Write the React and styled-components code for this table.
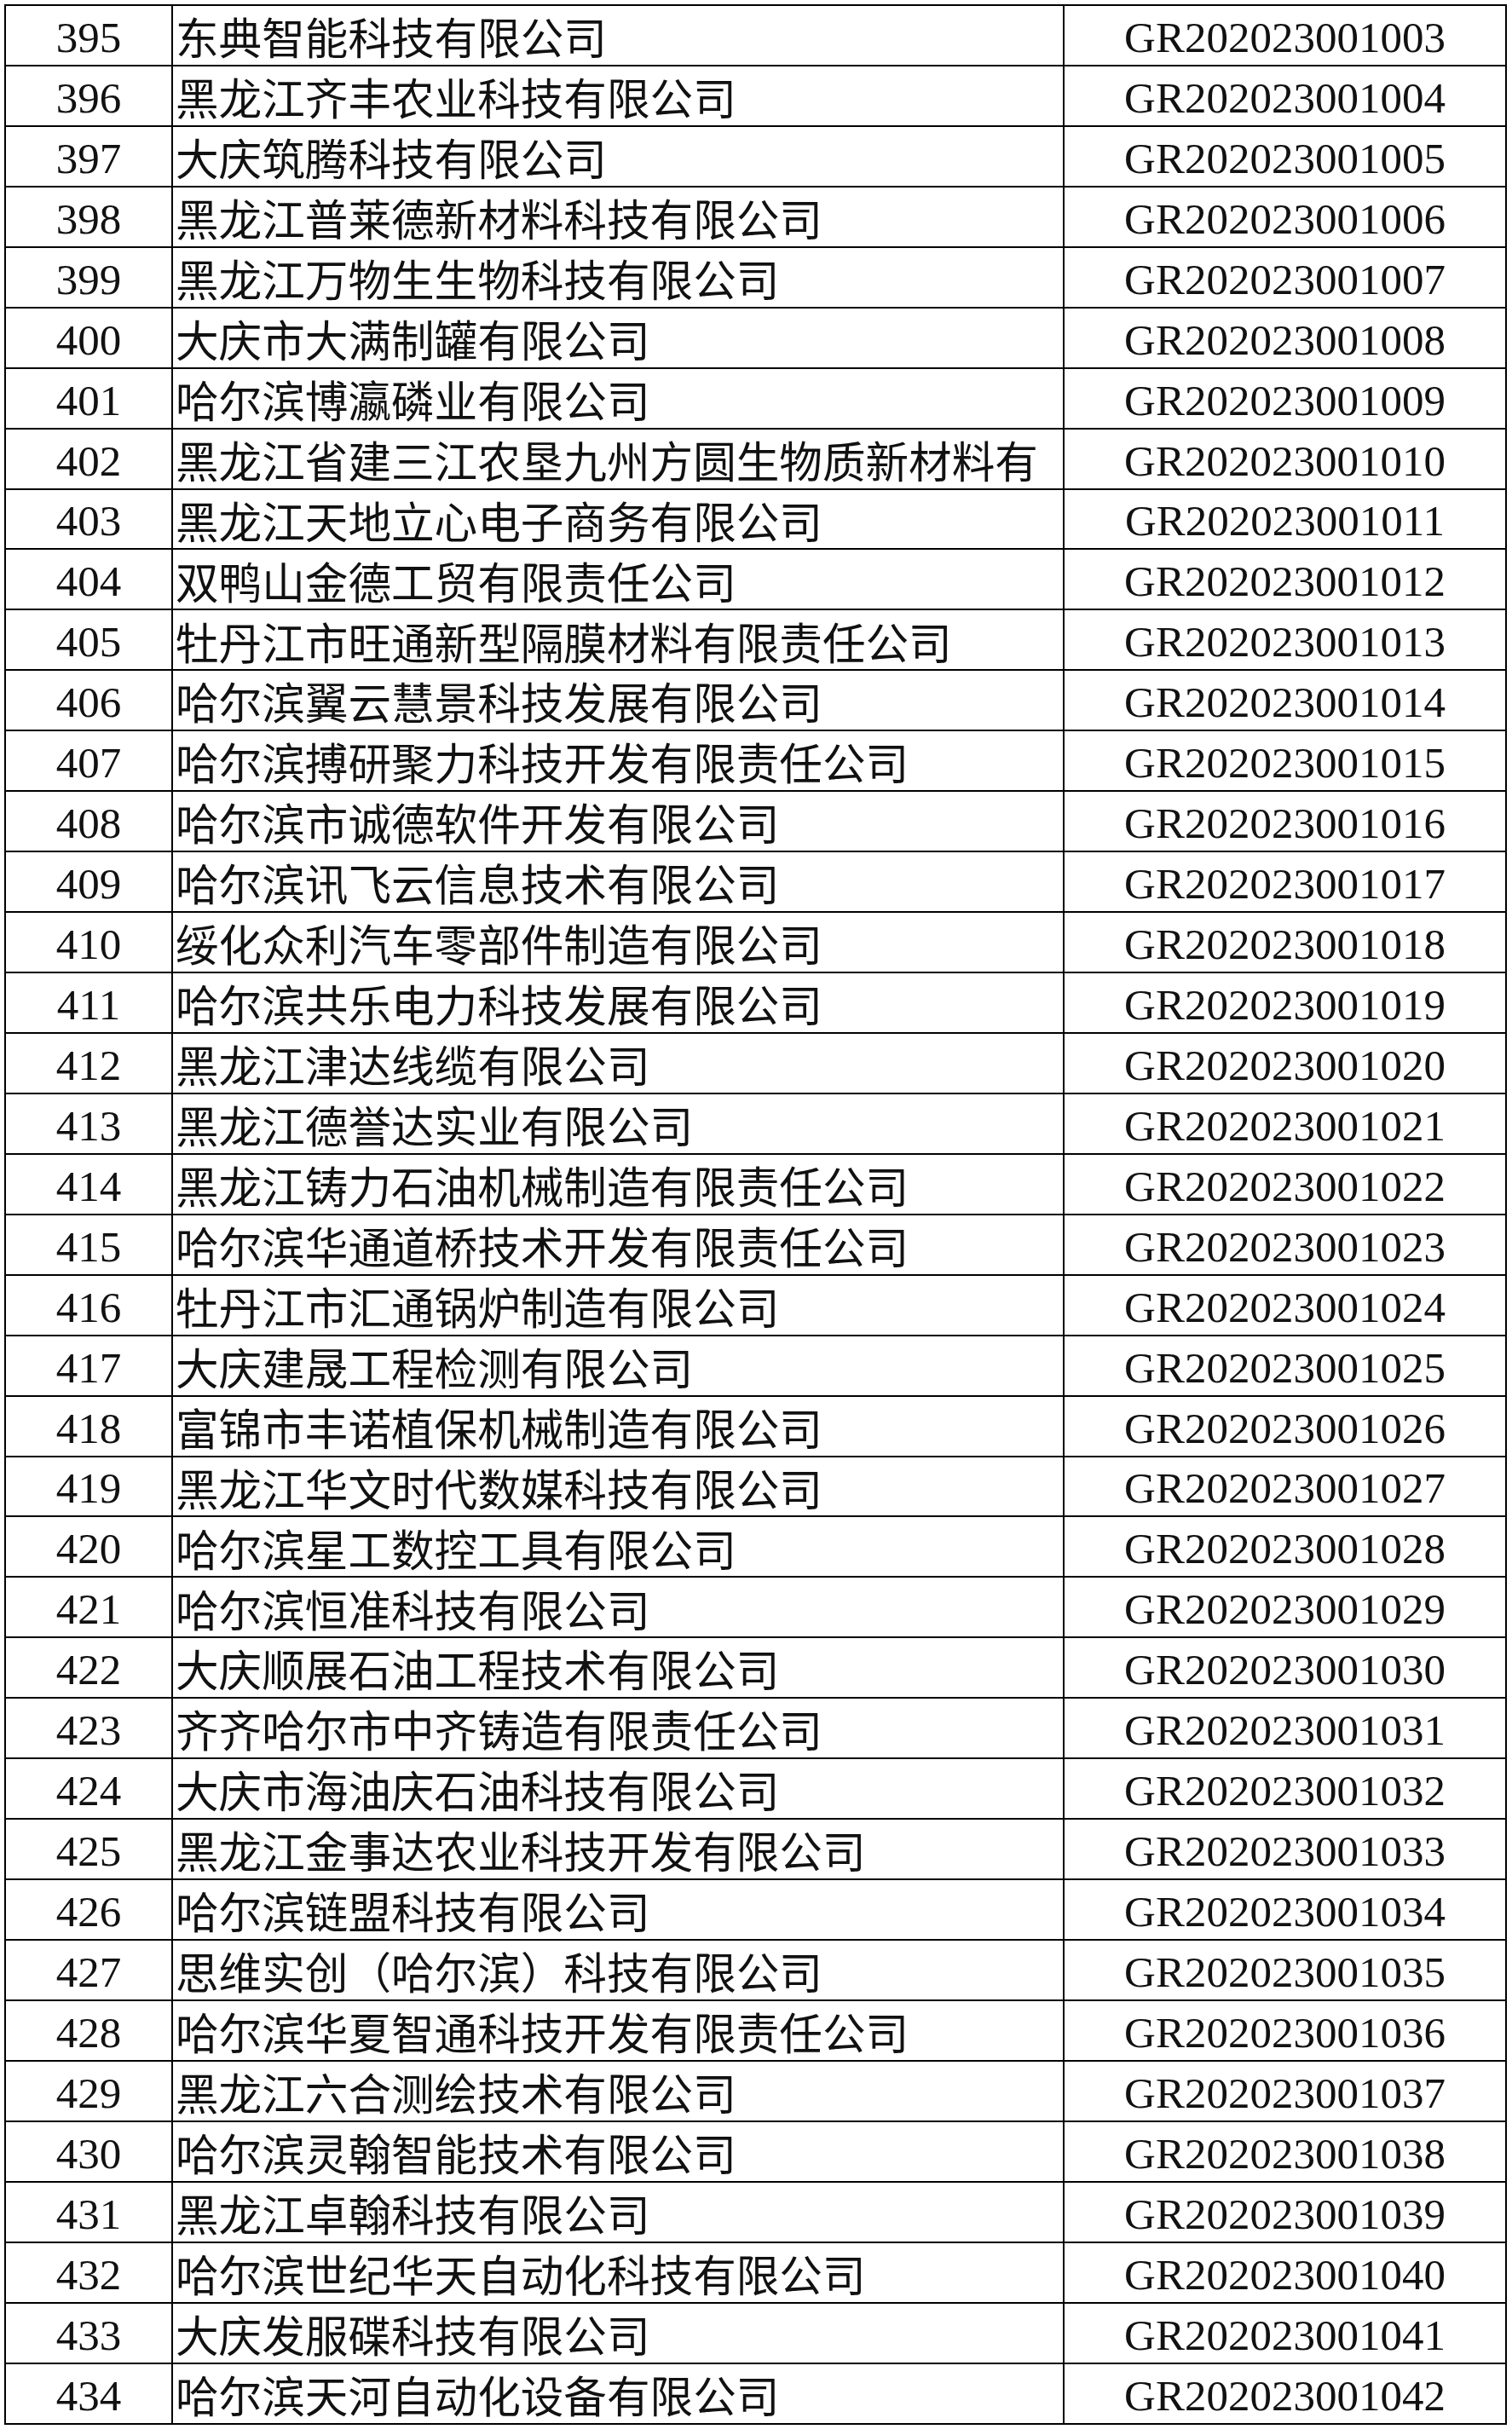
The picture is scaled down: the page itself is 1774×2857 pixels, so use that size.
import React from "react";
import styled, { createGlobalStyle } from "styled-components";

const GlobalStyle = createGlobalStyle`
  html, body {
    margin: 0;
    padding: 0;
    background: #ffffff;
  }
  body {
    font-family: "Liberation Serif", "Noto Sans CJK SC", serif;
    color: #000;
  }
`;

const names = [
  "东典智能科技有限公司",
  "黑龙江齐丰农业科技有限公司",
  "大庆筑腾科技有限公司",
  "黑龙江普莱德新材料科技有限公司",
  "黑龙江万物生生物科技有限公司",
  "大庆市大满制罐有限公司",
  "哈尔滨博瀛磷业有限公司",
  "黑龙江省建三江农垦九州方圆生物质新材料有",
  "黑龙江天地立心电子商务有限公司",
  "双鸭山金德工贸有限责任公司",
  "牡丹江市旺通新型隔膜材料有限责任公司",
  "哈尔滨翼云慧景科技发展有限公司",
  "哈尔滨搏研聚力科技开发有限责任公司",
  "哈尔滨市诚德软件开发有限公司",
  "哈尔滨讯飞云信息技术有限公司",
  "绥化众利汽车零部件制造有限公司",
  "哈尔滨共乐电力科技发展有限公司",
  "黑龙江津达线缆有限公司",
  "黑龙江德誉达实业有限公司",
  "黑龙江铸力石油机械制造有限责任公司",
  "哈尔滨华通道桥技术开发有限责任公司",
  "牡丹江市汇通锅炉制造有限公司",
  "大庆建晟工程检测有限公司",
  "富锦市丰诺植保机械制造有限公司",
  "黑龙江华文时代数媒科技有限公司",
  "哈尔滨星工数控工具有限公司",
  "哈尔滨恒准科技有限公司",
  "大庆顺展石油工程技术有限公司",
  "齐齐哈尔市中齐铸造有限责任公司",
  "大庆市海油庆石油科技有限公司",
  "黑龙江金事达农业科技开发有限公司",
  "哈尔滨链盟科技有限公司",
  "思维实创（哈尔滨）科技有限公司",
  "哈尔滨华夏智通科技开发有限责任公司",
  "黑龙江六合测绘技术有限公司",
  "哈尔滨灵翰智能技术有限公司",
  "黑龙江卓翰科技有限公司",
  "哈尔滨世纪华天自动化科技有限公司",
  "大庆发服碟科技有限公司",
  "哈尔滨天河自动化设备有限公司",
];

const rows = names.map((name, i) => ({
  no: 395 + i,
  name,
  code: "GR20202300" + String(1003 + i),
}));

const Page = styled.div`
  padding: 5px 0 0 5px;
  width: 1774px;
  height: 2857px;
  box-sizing: border-box;
  overflow: hidden;
`;

const Table = styled.div`
  width: 1763px;
  border-top: 2px solid #000;
  border-left: 2px solid #000;
  box-sizing: border-box;
  display: flex;
  flex-direction: column;
`;

const Row = styled.div`
  display: grid;
  grid-template-columns: 196px 1046px 519px;
  height: 70.95px;
`;

const Cell = styled.div`
  box-sizing: border-box;
  border-right: 2px solid #000;
  border-bottom: 2px solid #000;
  display: flex;
  align-items: center;
  white-space: nowrap;
  line-height: 1;
  color: #111;
  padding-top: ${(p) => p.$shift || 0}px;
`;

const NumCell = styled(Cell)`
  justify-content: center;
  font-family: "Liberation Serif", serif;
  font-size: 51px;
`;

const NameCell = styled(Cell)`
  justify-content: flex-start;
  padding-left: 3px;
  font-family: "Noto Sans CJK SC", "Noto Sans CJK TC", sans-serif;
  font-weight: 400;
  font-size: 50.6px;
`;

const CodeCell = styled(Cell)`
  justify-content: center;
  font-family: "Liberation Serif", serif;
  font-size: 51px;
`;

export default function App() {
  return (
    <>
      <GlobalStyle />
      <Page>
        <Table>
          {rows.map((r) => (
            <Row key={r.no}>
              <NumCell $shift={6}>{r.no}</NumCell>
              <NameCell $shift={2}>{r.name}</NameCell>
              <CodeCell $shift={6}>{r.code}</CodeCell>
            </Row>
          ))}
        </Table>
      </Page>
    </>
  );
}
